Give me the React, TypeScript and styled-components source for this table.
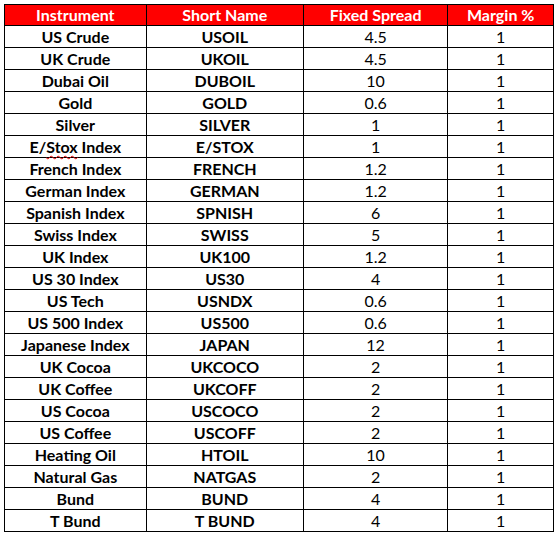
import React from "react";
import styled, { createGlobalStyle } from "styled-components";

const rows: [string, string, string, string][] = [
  ["US Crude", "USOIL", "4.5", "1"],
  ["UK Crude", "UKOIL", "4.5", "1"],
  ["Dubai Oil", "DUBOIL", "10", "1"],
  ["Gold", "GOLD", "0.6", "1"],
  ["Silver", "SILVER", "1", "1"],
  ["E/Stox Index", "E/STOX", "1", "1"],
  ["French Index", "FRENCH", "1.2", "1"],
  ["German Index", "GERMAN", "1.2", "1"],
  ["Spanish Index", "SPNISH", "6", "1"],
  ["Swiss Index", "SWISS", "5", "1"],
  ["UK Index", "UK100", "1.2", "1"],
  ["US 30 Index", "US30", "4", "1"],
  ["US Tech", "USNDX", "0.6", "1"],
  ["US 500 Index", "US500", "0.6", "1"],
  ["Japanese Index", "JAPAN", "12", "1"],
  ["UK Cocoa", "UKCOCO", "2", "1"],
  ["UK Coffee", "UKCOFF", "2", "1"],
  ["US Cocoa", "USCOCO", "2", "1"],
  ["US Coffee", "USCOFF", "2", "1"],
  ["Heating Oil", "HTOIL", "10", "1"],
  ["Natural Gas", "NATGAS", "2", "1"],
  ["Bund", "BUND", "4", "1"],
  ["T Bund", "T BUND", "4", "1"],
];

const columns = [
  { title: "Instrument", width: 142 },
  { title: "Short Name", width: 158 },
  { title: "Fixed Spread", width: 145 },
  { title: "Margin %", width: 106 },
];

const GlobalStyle = createGlobalStyle`
  body {
    margin: 0;
    background: #ffffff;
  }
`;

const Page = styled("div")`
  padding: 4px;
`;

const Table = styled("table")`
  border-collapse: collapse;
  table-layout: fixed;
  font-family: Lato, "Liberation Sans", sans-serif;
  font-size: 16px;
  color: #000;
`;

const Col = styled("col")<{ $w: number }>`
  width: ${(p) => p.$w}px;
`;

const HeadCell = styled("th")`
  height: 20px;
  padding: 0;
  background: #ff0000;
  color: #fff;
  font-weight: 700;
  text-align: center;
  border: 1px solid #000;
  line-height: 20px;
  white-space: nowrap;
`;

const Cell = styled("td")<{ $bold?: boolean }>`
  height: 21px;
  padding: 0;
  padding-top: 1px;
  box-sizing: border-box;
  text-align: center;
  border: 1px solid #000;
  font-weight: ${(p) => (p.$bold ? 700 : 400)};
  line-height: 20px;
  white-space: nowrap;
`;

const Squiggle = styled("span")`
  text-decoration-line: underline;
  text-decoration-style: wavy;
  text-decoration-color: #e00000;
  text-decoration-thickness: 1px;
  text-underline-offset: 2px;
`;

const name = (s: string) =>
  s === "E/Stox Index" ? (
    <>
      E/<Squiggle>Stox</Squiggle> Index
    </>
  ) : (
    s
  );

const App = () => {
  return (
    <Page>
      <GlobalStyle />
      <Table>
        <colgroup>
          {columns.map((c) => (
            <Col key={c.title} $w={c.width} />
          ))}
        </colgroup>
        <thead>
          <tr>
            {columns.map((c) => (
              <HeadCell key={c.title}>{c.title}</HeadCell>
            ))}
          </tr>
        </thead>
        <tbody>
          {rows.map((r) => (
            <tr key={r[0]}>
              <Cell $bold>{name(r[0])}</Cell>
              <Cell $bold>{r[1]}</Cell>
              <Cell>{r[2]}</Cell>
              <Cell>{r[3]}</Cell>
            </tr>
          ))}
        </tbody>
      </Table>
    </Page>
  );
};

export default App;
